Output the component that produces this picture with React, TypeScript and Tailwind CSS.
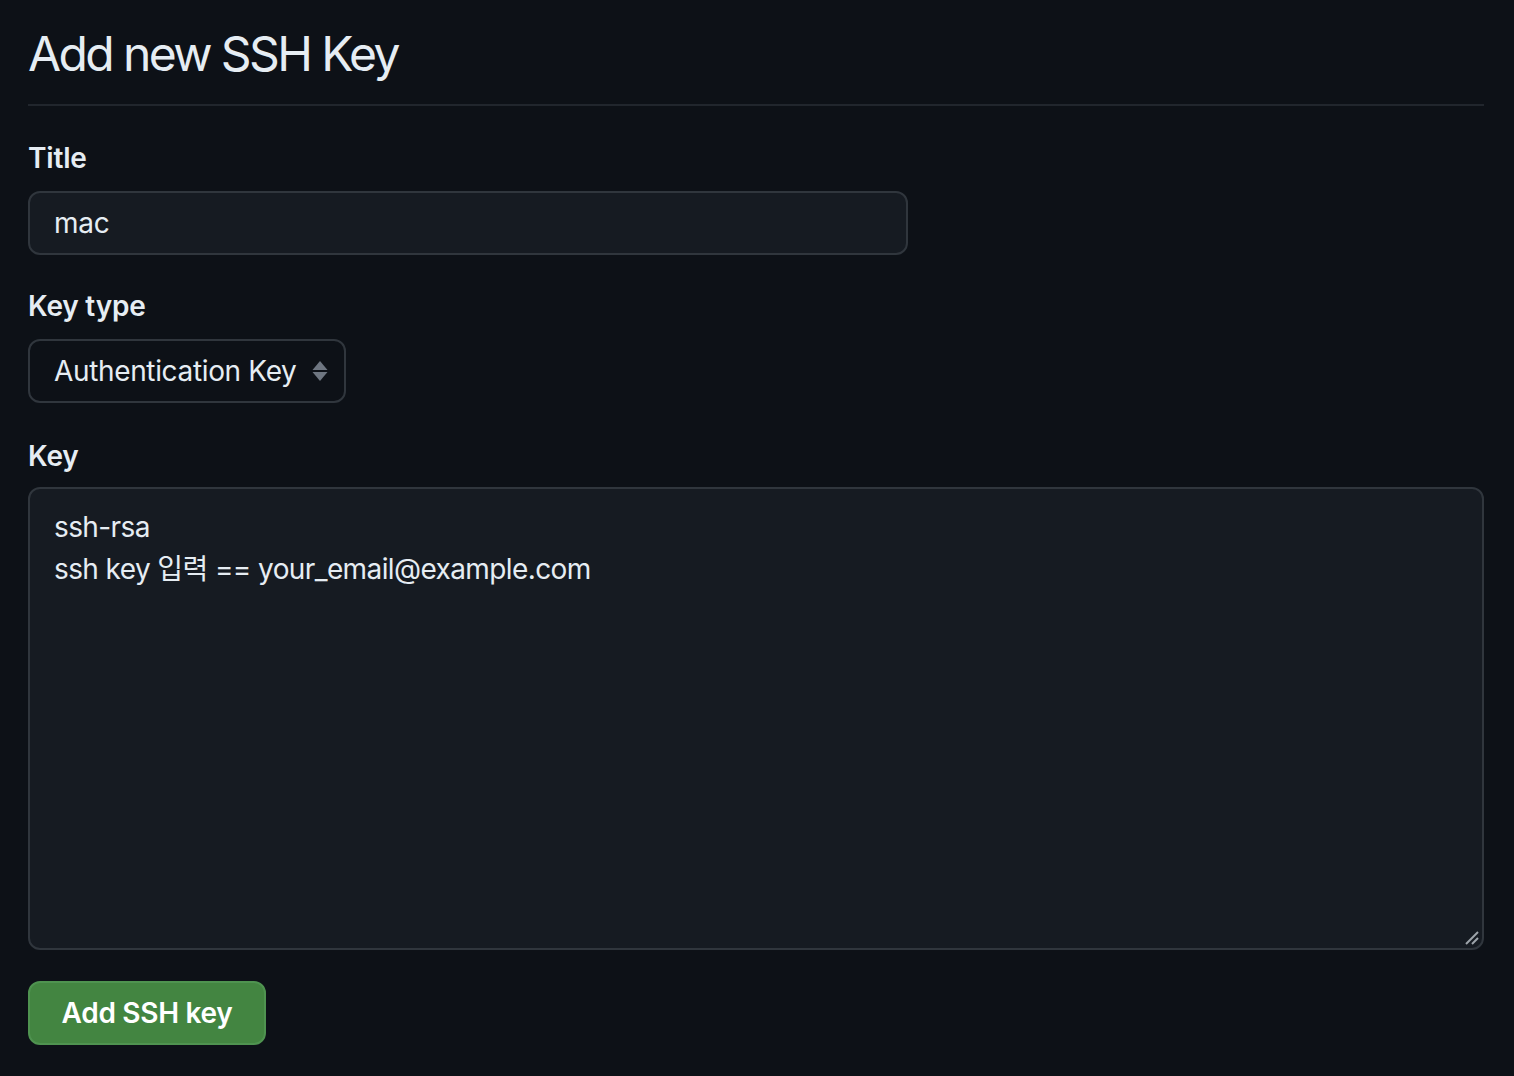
import React from 'react';

const font = { fontFamily: 'Inter, "Noto Sans CJK KR", sans-serif' };

function Label({ children }: { children: React.ReactNode }) {
  return (
    <label className="block text-[28px] font-semibold leading-[42px] tracking-[-0.2px] text-[#e6edf3]">
      {children}
    </label>
  );
}

export default function App() {
  return (
    <div
      className="min-h-screen bg-[#0d1117] pl-[28px] pr-[30px] pt-[24px] text-[#e6edf3]"
      style={font}
    >
      <h2 className="border-b-2 border-[#21262d] pb-[20px] text-[48px] font-normal leading-[60px] tracking-[-2.6px]">
        Add new SSH Key
      </h2>

      <form className="pt-[31px]">
        <div>
          <Label>Title</Label>
          <div className="mt-[12px] flex h-[64px] w-[880px] items-center rounded-[12px] border-2 border-[#30363d] bg-[#161b22] px-[24px] text-[28px] tracking-[-0.3px]">
            mac
          </div>
        </div>

        <div className="mt-[30px]">
          <Label>Key type</Label>
          <div className="mt-[12px] flex h-[64px] w-[318px] items-center justify-between rounded-[12px] border-2 border-[#30363d] bg-[#0d1117] pl-[24px] pr-[16px] text-[28px] tracking-[-0.35px]">
            <span>Authentication Key</span>
            <svg width="16" height="21" viewBox="0 0 16 21" fill="#6e7681">
              <path d="M8 0 L15.5 9 H0.5 Z" />
              <path d="M0.5 11 H15.5 L8 20 Z" />
            </svg>
          </div>
        </div>

        <div className="mt-[32px]">
          <Label>Key</Label>
          <div className="relative mt-[10px] h-[463px] w-full rounded-[12px] border-2 border-[#30363d] bg-[#161b22] px-[24px] pt-[17px] text-[28px] leading-[42px] tracking-[-0.6px]">
            <div>ssh-rsa</div>
            <div>ssh key 입력 == your_email@example.com</div>
            <svg
              className="absolute bottom-[3px] right-[3px]"
              width="14"
              height="14"
              viewBox="0 0 14 14"
              stroke="#9ea4ab"
              strokeWidth="2"
            >
              <path d="M1 13 L13 1" />
              <path d="M7 13 L13 7" />
            </svg>
          </div>
        </div>

        <button
          type="button"
          className="mt-[31px] flex h-[64px] w-[238px] items-center justify-center rounded-[12px] border-2 border-[#4f9350] bg-[#438541] text-[28px] font-semibold tracking-[-0.3px] text-white"
        >
          Add SSH key
        </button>
      </form>
    </div>
  );
}
